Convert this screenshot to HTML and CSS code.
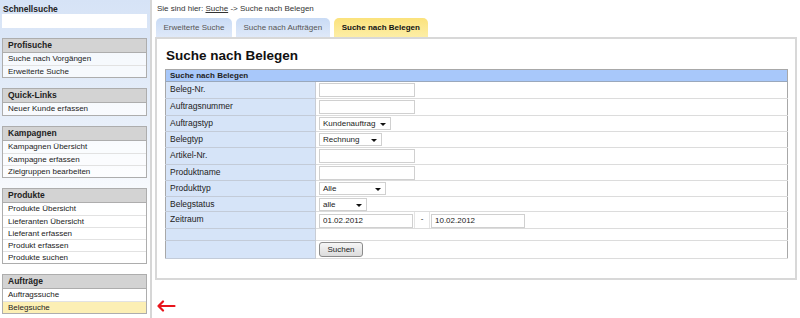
FILE: index.html
```html
<!DOCTYPE html>
<html lang="de">
<head>
    <meta charset="UTF-8">
    <title>Suche nach Belegen</title>
    <link rel="stylesheet" href="styles.css">
</head>
<body>
    <div class="sidebar">
        <div class="schnell-titel">Schnellsuche</div>
        <input type="text" class="schnell-input">

        <div class="box">
            <div class="box-kopf">Profisuche</div>
            <div class="box-item">Suche nach Vorgängen</div>
            <div class="box-item">Erweiterte Suche</div>
        </div>

        <div class="box">
            <div class="box-kopf">Quick-Links</div>
            <div class="box-item">Neuer Kunde erfassen</div>
        </div>

        <div class="box">
            <div class="box-kopf">Kampagnen</div>
            <div class="box-item">Kampagnen Übersicht</div>
            <div class="box-item">Kampagne erfassen</div>
            <div class="box-item">Zielgruppen bearbeiten</div>
        </div>

        <div class="box">
            <div class="box-kopf">Produkte</div>
            <div class="box-item">Produkte Übersicht</div>
            <div class="box-item">Lieferanten Übersicht</div>
            <div class="box-item">Lieferant erfassen</div>
            <div class="box-item">Produkt erfassen</div>
            <div class="box-item">Produkte suchen</div>
        </div>

        <div class="box">
            <div class="box-kopf">Aufträge</div>
            <div class="box-item">Auftragssuche</div>
            <div class="box-item aktiv">Belegsuche</div>
        </div>
    </div>

    <div class="haupt">
        <div class="pfad">Sie sind hier: <a href="#">Suche</a> -&gt; Suche nach Belegen</div>

        <div class="tabs">
            <div class="tab">Erweiterte Suche</div>
            <div class="tab">Suche nach Aufträgen</div>
            <div class="tab tab-aktiv">Suche nach Belegen</div>
        </div>

        <div class="panel">
            <h1>Suche nach Belegen</h1>

            <table class="formular">
                <tr class="kopf"><td colspan="2">Suche nach Belegen</td></tr>
                <tr class="h17"><td class="lbl">Beleg-Nr.</td><td class="val"><input type="text" class="feld"></td></tr>
                <tr class="h17"><td class="lbl">Auftragsnummer</td><td class="val"><input type="text" class="feld"></td></tr>
                <tr class="h16"><td class="lbl">Auftragstyp</td><td class="val"><div class="auswahl" style="width: 72px">Kundenauftrag<span class="pfeil"></span></div></td></tr>
                <tr class="h16"><td class="lbl">Belegtyp</td><td class="val"><div class="auswahl" style="width: 63px">Rechnung<span class="pfeil"></span></div></td></tr>
                <tr class="h17"><td class="lbl">Artikel-Nr.</td><td class="val"><input type="text" class="feld"></td></tr>
                <tr class="h16"><td class="lbl">Produktname</td><td class="val"><input type="text" class="feld"></td></tr>
                <tr class="h16"><td class="lbl">Produkttyp</td><td class="val"><div class="auswahl" style="width: 67px">Alle<span class="pfeil"></span></div></td></tr>
                <tr class="h15"><td class="lbl">Belegstatus</td><td class="val"><div class="auswahl" style="width: 48px">alle<span class="pfeil"></span></div></td></tr>
                <tr class="h17">
                    <td class="lbl">Zeitraum</td>
                    <td class="val">
                        <div class="zeitraum">
                            <input type="text" class="feld datum" value="01.02.2012">
                            <span class="strich">-</span>
                            <input type="text" class="feld datum" value="10.02.2012">
                        </div>
                    </td>
                </tr>
                <tr class="h12"><td class="lbl"></td><td class="val"></td></tr>
                <tr class="h18"><td class="lbl"></td><td class="val"><button type="button">Suchen</button></td></tr>
            </table>
        </div>

        <div class="zeiger">
            <svg width="20" height="12" viewBox="0 0 20 12">
                <path d="M2.5 6 H18.5 M7 1.5 L2.5 6 L7 10.5" fill="none" stroke="#e8141b" stroke-width="2.2" stroke-linecap="round" stroke-linejoin="round"/>
            </svg>
        </div>
    </div>
</body>
</html>
```

FILE: styles.css
```css
body {
    margin: 0;
    display: flex;
    height: 318px;
    overflow: hidden;
    font-family: "Liberation Sans", Arial, sans-serif;
    font-size: 8px;
    color: #222;
    background-color: #ffffff;
}

.sidebar {
    width: 152px;
    flex-shrink: 0;
    padding: 0 3px 0 2px;
    box-sizing: border-box;
    border-right: 2px solid #d6d6d6;
    background: linear-gradient(to bottom, #d6e3f6 0%, #e9f0fa 130px, #ffffff 220px);
}

.schnell-titel {
    font-weight: bold;
    font-size: 8.5px;
    padding: 4px 1px 0;
    height: 10px;
}

.schnell-input {
    display: block;
    width: 100%;
    height: 14px;
    box-sizing: border-box;
    border: none;
    margin: 0;
    background-color: #ffffff;
}

.box {
    margin-top: 10px;
    border: 1px solid #adadad;
}

.box-kopf {
    height: 13px;
    line-height: 13px;
    padding-left: 5px;
    font-weight: bold;
    font-size: 8.5px;
    background-color: #d3d3d3;
    border-bottom: 1px solid #adadad;
}

.box-item {
    height: 11px;
    line-height: 11px;
    padding-left: 5px;
    background-color: rgba(255, 255, 255, 0.7);
    border-top: 1px solid #e2e2e2;
}

.box-kopf + .box-item {
    border-top: none;
    height: 12px;
    line-height: 12px;
}

.box-item.aktiv {
    background-color: #fcefb4;
}

.haupt {
    flex: 1;
    padding-left: 3px;
}

.pfad {
    padding: 4px 0 0 2px;
    height: 14px;
    color: #333;
}

.pfad a {
    color: #333;
}

.tabs {
    display: flex;
    gap: 4px;
    height: 19px;
    margin-left: 1px;
}

.tab {
    padding: 0 7.5px;
    line-height: 19px;
    color: #555;
    border-radius: 5px 5px 0 0;
    background: linear-gradient(to bottom, #c9dbf5, #dfe9f9);
}

.tab-aktiv {
    padding: 0 8px;
    color: #111;
    font-weight: bold;
    background: linear-gradient(to bottom, #fbe27c, #fdeea6);
}

.panel {
    height: 243px;
    margin-right: 3px;
    box-sizing: border-box;
    border: 2px solid #d8d8d8;
    padding: 6px 7px 0 8px;
}

.panel h1 {
    margin: 3px 0 6px 1px;
    font-size: 13.5px;
    font-weight: bold;
    color: #111;
}

.formular {
    width: 100%;
    border-collapse: collapse;
    border: 1px solid #a8a8a8;
}

.formular td {
    padding: 1px 0 0 3px;
    vertical-align: top;
    border-bottom: 1px solid #dcdcdc;
}

.formular .kopf td {
    height: 11px;
    line-height: 11px;
    padding: 0 0 0 4px;
    font-weight: bold;
    background-color: #a8c8fa;
    border-bottom: 1px solid #9aa8bc;
}

.formular .lbl {
    width: 145px;
    padding-left: 4px;
    font-size: 8.5px;
    line-height: 12px;
    background-color: #d6e4f8;
    border-bottom-color: #c3cbd8;
    border-right: 1px solid #c8ccd4;
}

.h12 td { height: 10px; }
.h15 td { height: 13px; }
.h16 td { height: 14px; }
.h17 td { height: 15px; }
.h18 td { height: 16px; }

.feld {
    display: block;
    width: 96px;
    height: 14px;
    box-sizing: border-box;
    margin: 0;
    padding: 0 3px;
    border: 1px solid #d0d0d0;
    font-family: "Liberation Sans", Arial, sans-serif;
    font-size: 8px;
    color: #222;
}

.auswahl {
    position: relative;
    height: 13px;
    line-height: 12px;
    box-sizing: border-box;
    padding-left: 3px;
    border: 1px solid #d0d0d0;
    background-color: #ffffff;
}

.pfeil {
    position: absolute;
    right: 4px;
    top: 5px;
    border-left: 3px solid transparent;
    border-right: 3px solid transparent;
    border-top: 3px solid #111;
}

.zeitraum {
    display: flex;
    align-items: center;
}

.zeitraum .datum {
    width: 94px;
}

.strich {
    width: 14px;
    height: 16px;
    line-height: 14px;
    margin: -1px 1px 0;
    text-align: center;
    border-left: 1px solid #e4e4e4;
    border-right: 1px solid #e4e4e4;
}

button {
    display: block;
    width: 44px;
    height: 15px;
    margin: 0;
    padding: 0;
    font-family: "Liberation Sans", Arial, sans-serif;
    font-size: 8px;
    color: #222;
    border: 1px solid #8c8c8c;
    border-radius: 3px;
    background: linear-gradient(to bottom, #f6f6f6, #dcdcdc);
}

.zeiger {
    margin: 20px 0 0 1px;
    height: 12px;
}

.zeiger svg {
    display: block;
}
```
